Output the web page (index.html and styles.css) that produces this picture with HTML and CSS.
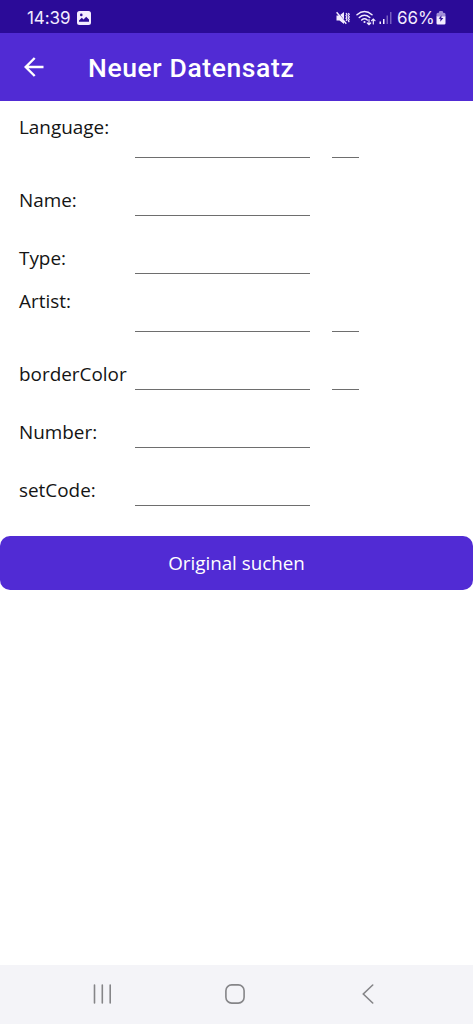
FILE: index.html
```html
<!DOCTYPE html>
<html lang="de">
<head>
<meta charset="utf-8">
<title>Neuer Datensatz</title>
<link rel="stylesheet" href="styles.css">
</head>
<body>
<div class="status">
  <span class="clock">14:39</span>
  <svg class="picture" width="14" height="14" viewBox="0 0 14 14"><path fill="#f3ecff" fill-rule="evenodd" d="M2.500 0h9A2.500 2.500 0 0 1 14 2.500v9a2.500 2.500 0 0 1-2.500 2.500h-9A2.500 2.500 0 0 1 0 11.500v-9A2.500 2.500 0 0 1 2.500 0zM2 10.800h10V8.600L9.200 5.800 6.500 8.500 4.800 6.800 2 9.500zM4.300 2.600a1.300 1.300 0 1 0 0 2.600 1.300 1.300 0 0 0 0-2.600z"/></svg>
  <div class="indicators">
    <svg width="14" height="14" viewBox="0 0 14 14" fill="none" stroke="#f3ecff"><path fill="#f3ecff" stroke="none" d="M.5 4.500h3L8 1v12L3.500 9.500h-3z"/><path stroke="#2b0b98" stroke-width="1" d="M1.500 1.200l9 11"/><path stroke-width="1.400" d="M.6 1.200l9.700 11.600"/><path stroke-width="1.200" d="M10 2l1 1.300-1 1.300 1 1.300-1 1.300 1 1.300-1 1.300M12.300 2l1 1.300-1 1.300 1 1.300-1 1.300 1 1.300-1 1.300 1 1.300"/></svg>
    <svg class="wifi" width="20" height="16" viewBox="0 0 20 16" fill="none" stroke="#f3ecff" stroke-width="1.500" stroke-linecap="round"><path d="M1 4.700Q8.500-1.700 16 4.700M3.300 7.500Q8.500 3 13.700 7.500M5.700 10Q8.500 7.600 11.300 10"/><circle cx="8.500" cy="12" r="1.100" fill="#f3ecff" stroke="none"/><path stroke-width="1.200" d="M13 9.500v5M11.300 13l1.700 1.700 1.700-1.700M17.300 14V9M15.600 10.600L17.300 9l1.700 1.600"/></svg>
    <svg class="signal" width="13" height="14" viewBox="0 0 13 14"><path fill="#f3ecff" d="M.5 10.500H2V13H.5zM4 8h1.500v5H4z"/><path fill="#775fc0" d="M7.500 4.500H9V13H7.500zM11 1h1.500v12H11z"/></svg>
    <span class="percent">66%</span>
    <svg class="battery" width="10" height="14" viewBox="0 0 10 14"><rect x="3" y="0" width="4" height="3" rx="1" fill="#a28ed9"/><path fill="#a28ed9" d="M2 1.800h6a1.500 1.500 0 0 1 1.500 1.500V6h-9V3.300A1.500 1.500 0 0 1 2 1.800z"/><path fill="#f3ecff" d="M.5 5.500h9v6.700A1.300 1.300 0 0 1 8.200 13.500H1.800A1.300 1.300 0 0 1 .5 12.200z"/><path fill="#2b0b98" d="M5.500 4.300L2.600 7.800h1.900L4.200 10.800 7.400 7H5.300z"/></svg>
  </div>
</div>
<header class="appbar">
  <svg width="20" height="20" viewBox="0 0 20 20" fill="none" stroke="#fff" stroke-width="2.400"><path d="M19.500 10H1.800M10.700 1L1.700 10l9 9"/></svg>
  <h1 class="title">Neuer Datensatz</h1>
</header>
<main class="form">
  <div class="row top"><label>Language:</label><span class="entry"></span><span class="entry short"></span></div>
  <div class="row"><label>Name:</label><span class="entry"></span></div>
  <div class="row"><label>Type:</label><span class="entry"></span></div>
  <div class="row top"><label>Artist:</label><span class="entry"></span><span class="entry short"></span></div>
  <div class="row"><label>borderColor</label><span class="entry"></span><span class="entry short"></span></div>
  <div class="row"><label>Number:</label><span class="entry"></span></div>
  <div class="row"><label>setCode:</label><span class="entry"></span></div>
</main>
<button class="search">Original suchen</button>
<nav class="navbar">
  <svg width="20" height="20" viewBox="0 0 20 20" fill="none" stroke="#858588" stroke-width="1.600" stroke-linecap="round"><path d="M2.500 1v18M10.300 1v18M18.200 1v18"/></svg>
  <svg width="20" height="20" viewBox="0 0 20 20" fill="none" stroke="#858588" stroke-width="1.600"><rect x=".9" y=".9" width="18.200" height="18.200" rx="5.800"/></svg>
  <svg class="back" width="12" height="20" viewBox="0 0 12 20" fill="none" stroke="#858588" stroke-width="1.600" stroke-linecap="round"><path d="M10.700 1L1.300 10l9.400 9"/></svg>
</nav>
</body>
</html>
```
FILE: styles.css
```css
* { box-sizing: border-box; }
body {
  margin: 0;
  height: 1024px;
  display: flex;
  flex-direction: column;
  background: #fff;
  font-family: "Open Sans", sans-serif;
  color: #141414;
}
svg { display: block; flex: none; }
.status {
  height: 33px;
  background: #2b0b98;
  color: #f3ecff;
  display: flex;
  align-items: center;
  padding: 3px 27px 0 27px;
  font: 17px/20px Inter, sans-serif;
}
.clock { width: 50px; white-space: nowrap; letter-spacing: -0.1px; }
.indicators { margin-left: auto; display: flex; align-items: center; }
.wifi { margin-left: 6px; }
.signal { margin-left: 3px; }
.percent { margin-left: 5px; width: 38px; white-space: nowrap; }
.battery { margin-left: 1px; }
.appbar {
  height: 68px;
  background: #512bd4;
  display: flex;
  align-items: center;
  gap: 44px;
  padding-left: 24px;
}
.title {
  margin: 2px 0 0;
  color: #fff;
  font: 500 26.5px/32px Roboto, sans-serif;
  letter-spacing: 0.6px;
}
.form { padding-top: 13px; }
.row {
  height: 58px;
  display: grid;
  grid-template-columns: 116px 175px 49px;
  align-items: center;
  padding-left: 19px;
}
.row label {
  padding-bottom: 2px;
  font-size: 18.9px;
  line-height: 27px;
  white-space: nowrap;
}
.row.top label { align-self: start; }
.entry { height: 44px; align-self: start; border-bottom: 1px solid #6e6e6e; }
.short { margin-left: 22px; }
.search {
  height: 54px;
  margin: 16px 0 0;
  padding: 0;
  border: 0;
  border-radius: 10px;
  background: #512bd4;
  color: #fff;
  font: 18.8px/27px "Open Sans", sans-serif;
}
.navbar {
  height: 59px;
  margin-top: auto;
  background: #f4f4f8;
  display: flex;
  align-items: center;
  gap: 112.5px;
  padding: 0 0 1px 92px;
}
.back { margin-left: 5px; }
```
